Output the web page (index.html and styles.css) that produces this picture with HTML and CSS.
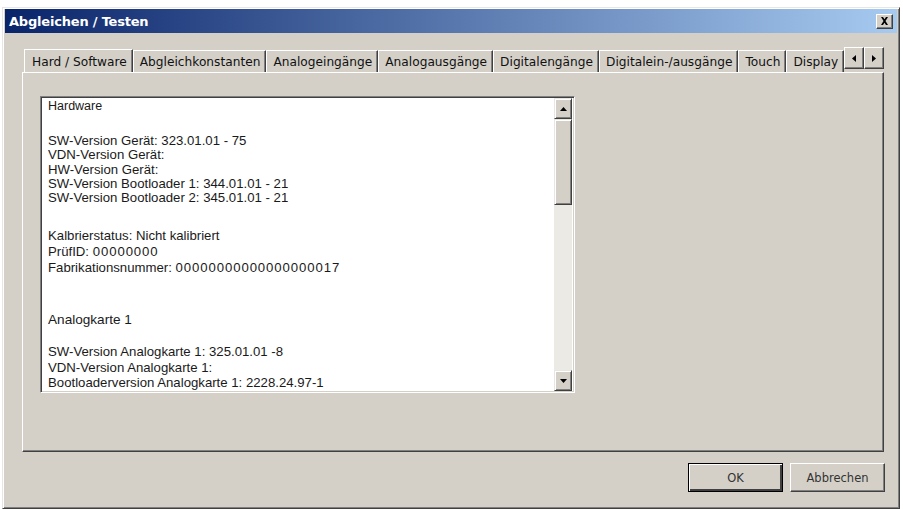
FILE: index.html
```html
<!DOCTYPE html>
<html lang="de">
<head>
  <meta charset="UTF-8" />
  <title>Abgleichen / Testen</title>
  <link rel="stylesheet" href="styles.css">
</head>
<body>
  <div class="window">
    <!-- Title bar -->
    <div class="titlebar">
      <span class="title">Abgleichen / Testen</span>
      <span class="close-btn">
        <svg width="9" height="8" viewBox="0 0 9 8"><path d="M1 0h2l1.5 2.2L6 0h2L5.5 4 8 8H6L4.5 5.8 3 8H1l2.5-4z" fill="#000"/></svg>
      </span>
    </div>

    <div class="dialog-body">
      <!-- Tabs -->
      <div class="tab-strip">
        <div class="tabs">
          <div class="tab active">Hard / Software</div>
          <div class="tab">Abgleichkonstanten</div>
          <div class="tab">Analogeingänge</div>
          <div class="tab">Analogausgänge</div>
          <div class="tab">Digitalengänge</div>
          <div class="tab">Digitalein-/ausgänge</div>
          <div class="tab">Touch</div>
          <div class="tab">Display</div>
        </div>
        <div class="tab-arrows">
          <span class="arrow-btn"><svg width="4" height="7" viewBox="0 0 4 7"><path d="M4 0v7L0 3.5z" fill="#000"/></svg></span>
          <span class="arrow-btn"><svg width="4" height="7" viewBox="0 0 4 7"><path d="M0 0v7l4-3.5z" fill="#000"/></svg></span>
        </div>
      </div>

      <div class="tab-pane">
        <div class="memo">
          <div class="memo-text">
            <div class="line">Hardware</div>
            <div class="group g1">
              <div>SW-Version Gerät: 323.01.01 - 75</div>
              <div>VDN-Version Gerät:</div>
              <div>HW-Version Gerät:</div>
              <div>SW-Version Bootloader 1: 344.01.01 - 21</div>
              <div>SW-Version Bootloader 2: 345.01.01 - 21</div>
            </div>
            <div class="group g2">
              <div>Kalbrierstatus: Nicht kalibriert</div>
              <div>PrüfID: <span class="num">00000000</span></div>
              <div>Fabrikationsnummer: <span class="num">00000000000000000017</span></div>
            </div>
            <div class="group g3">
              <div>Analogkarte 1</div>
            </div>
            <div class="group g4">
              <div>SW-Version Analogkarte 1: 325.01.01 -8</div>
              <div>VDN-Version Analogkarte 1:</div>
              <div>Bootloaderversion Analogkarte 1: 2228.24.97-1</div>
            </div>
          </div>
          <div class="scrollbar">
            <span class="sb-btn"><svg width="7" height="4" viewBox="0 0 7 4"><path d="M0 4h7L3.5 0z" fill="#000"/></svg></span>
            <span class="sb-thumb"></span>
            <span class="sb-track"></span>
            <span class="sb-btn"><svg width="7" height="4" viewBox="0 0 7 4"><path d="M0 0h7L3.5 4z" fill="#000"/></svg></span>
          </div>
        </div>
      </div>

      <div class="buttons">
        <button class="btn default">OK</button>
        <button class="btn">Abbrechen</button>
      </div>
    </div>
  </div>
</body>
</html>
```

FILE: styles.css
```css
* {
  margin: 0;
  padding: 0;
  box-sizing: border-box;
}

body {
  background: #fff;
  font-family: 'DejaVu Sans', Verdana, sans-serif;
  color: #000;
}

.window {
  margin: 7px 3px 0 2px;
  height: 502px;
  background: #d4d0c8;
  border: 1px solid;
  border-color: #e8e6e0 #404040 #404040 #e8e6e0;
  box-shadow: inset 1px 1px #fff, inset -1px -1px #808080;
  padding: 1px 2px 2px 2px;
  display: flex;
  flex-direction: column;
}

/* title bar */
.titlebar {
  height: 24px;
  background: linear-gradient(to right, #0a246a, #a6caf0);
  display: flex;
  align-items: center;
  justify-content: space-between;
  padding: 0 4px 0 4px;
}

.title {
  color: #fff;
  font-weight: bold;
  font-size: 13px;
  letter-spacing: -0.2px;
}

.close-btn {
  width: 17px;
  height: 15px;
  background: #d4d0c8;
  border: 1px solid;
  border-color: #fff #404040 #404040 #fff;
  box-shadow: inset -1px -1px #808080;
  display: flex;
  align-items: center;
  justify-content: center;
}

.dialog-body {
  flex: 1;
  padding: 15px 13px 0 17px;
  display: flex;
  flex-direction: column;
}

/* tabs */
.tab-strip {
  display: flex;
  align-items: flex-end;
  height: 24px;
  position: relative;
  z-index: 1;
}

.tabs {
  flex: 1;
  display: flex;
  align-items: flex-end;
  overflow: hidden;
  white-space: nowrap;
}

.tab {
  font-size: 12.2px;
  height: 22px;
  line-height: 23px;
  padding: 0 5px 0 6px;
  border-top: 1px solid #fff;
  border-left: 1px solid #fff;
  border-right: 1px solid #404040;
  box-shadow: inset -1px 0 #808080;
  color: #111;
}

.tab.active {
  height: 24px;
  line-height: 24px;
  padding: 0 5px 0 7px;
  background: #d4d0c8;
  margin-bottom: -1px;
  margin-left: 2px;
}

.tab-arrows {
  display: flex;
  align-self: flex-start;
  margin-top: -1px;
}

.arrow-btn {
  width: 20px;
  height: 22px;
  background: #d4d0c8;
  border: 1px solid;
  border-color: #fff #404040 #404040 #fff;
  box-shadow: inset -1px -1px #808080;
  display: flex;
  align-items: center;
  justify-content: center;
}

.tab-pane {
  height: 380px;
  border: 1px solid;
  border-color: #fff #404040 #404040 #fff;
  box-shadow: inset -1px -1px #808080;
  padding: 23px 0 0 17px;
}

/* read-only memo field */
.memo {
  width: 535px;
  height: 297px;
  background: #fff;
  border: 1px solid;
  border-color: #808080 #fff #fff #808080;
  box-shadow: inset 1px 1px #404040, inset -1px -1px #d4d0c8;
  display: flex;
  padding: 1px 2px 1px 1px;
}

.memo-text {
  flex: 1;
  overflow: hidden;
  padding: 1px 0 0 6px;
  font-family: 'Liberation Sans', Arial, sans-serif;
  font-size: 13.2px;
  color: #1a1a1a;
  white-space: nowrap;
}

.num {
  letter-spacing: 0.9px;
}

.line {
  line-height: 15px;
  font-size: 12.5px;
}

.g1 {
  margin-top: 20px;
  line-height: 14.25px;
}

.g2 {
  margin-top: 23px;
  line-height: 16px;
}

.g3 {
  margin-top: 36px;
  line-height: 16px;
  font-size: 13.6px;
}

.g4 {
  margin-top: 16px;
  line-height: 15.5px;
}

.scrollbar {
  width: 18px;
  display: flex;
  flex-direction: column;
  background: #eceae5;
}

.sb-btn, .sb-thumb {
  background: #d4d0c8;
  border: 1px solid;
  border-color: #e8e6e0 #404040 #404040 #e8e6e0;
  box-shadow: inset 1px 1px #fff, inset -1px -1px #808080;
}

.sb-btn {
  height: 21px;
  display: flex;
  align-items: center;
  justify-content: center;
}

.sb-thumb {
  height: 86px;
}

.sb-track {
  flex: 1;
}

/* dialog buttons */
.buttons {
  display: flex;
  justify-content: flex-end;
  gap: 7px;
  padding: 11px 0 0 0;
  margin-right: -1px;
}

.btn {
  width: 95px;
  height: 29px;
  font-family: 'DejaVu Sans', Verdana, sans-serif;
  font-size: 11.5px;
  color: #333;
  background: #d4d0c8;
  border: 1px solid;
  border-color: #fff #404040 #404040 #fff;
  box-shadow: inset -1px -1px #808080;
}

.btn.default {
  border: 1px solid #000;
  box-shadow: inset 1px 1px #fff, inset -2px -2px #404040;
}
```
